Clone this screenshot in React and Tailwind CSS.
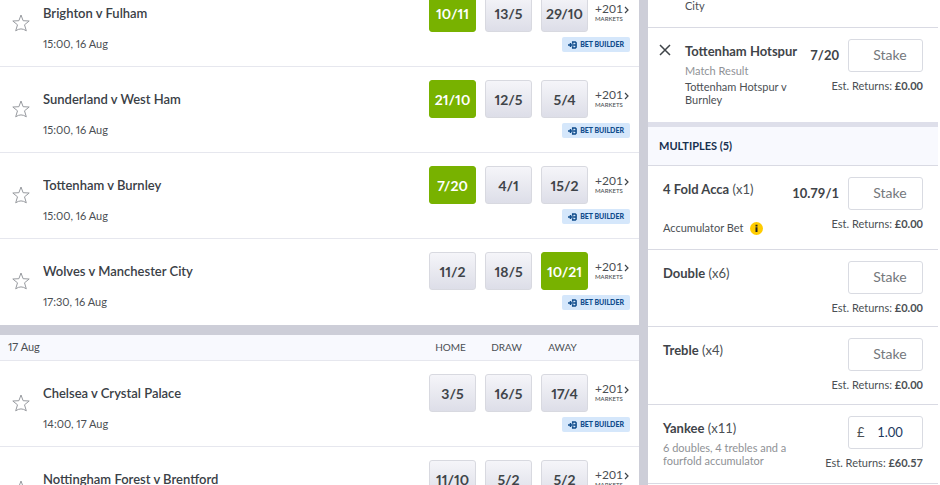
import { useState } from "react";

const saturday = [
    { name: "Brighton v Fulham", time: "15:00, 16 Aug", odds: ["10/11", "13/5", "29/10"], picked: 0 },
    { name: "Sunderland v West Ham", time: "15:00, 16 Aug", odds: ["21/10", "12/5", "5/4"], picked: 0 },
    { name: "Tottenham v Burnley", time: "15:00, 16 Aug", odds: ["7/20", "4/1", "15/2"], picked: 0 },
    { name: "Wolves v Manchester City", time: "17:30, 16 Aug", odds: ["11/2", "18/5", "10/21"], picked: 2 },
];

const sunday = [
    { name: "Chelsea v Crystal Palace", time: "14:00, 17 Aug", odds: ["3/5", "16/5", "17/4"] },
    { name: "Nottingham Forest v Brentford", odds: ["11/10", "5/2", "5/2"] },
];

const Star = () => (
    <svg viewBox="0 0 18 18" className="size-[18px]" fill="none" stroke="#979a9f" strokeWidth="1">
        <path d="M9 1 L11.1 6.7 L17.2 7 L12.5 10.8 L14.3 16.8 Q11.6 14.9 9 14.9 Q6.4 14.9 3.7 16.8 L5.5 10.8 L0.8 7 L6.9 6.7 Z" />
    </svg>
);

const BuilderIcon = () => (
    <svg viewBox="0 0 9 8" className="h-2 w-[9px]" fill="none" stroke="#0f4c8c" strokeWidth="1.5">
        <path d="M0 4 H8 M2.5 2 V6 M4.7 2.8 V1 H7.3 L8.1 1.8 V6.2 L7.3 7 H4.7 V5.2" />
    </svg>
);

const MatchRow = ({ match }) => {
    const [picked, setPicked] = useState(match.picked);
    return (
        <li className="flex h-[86px] border-b border-[#e6e7ee] pr-[9px] last:border-transparent">
            <button aria-label={"Favourite " + match.name} className="ml-3 mt-[33px] h-[18px]">
                <Star />
            </button>
            <div className="ml-[13px] min-w-0 flex-1 pt-[23px]">
                <a href="#" className="block truncate text-[13px] leading-[18px] font-semibold text-[#3a4046]">{match.name}</a>
                <div className="mt-[14px] text-[11px] leading-4 text-[#4b4f54] proportional-nums">{match.time}</div>
            </div>
            <div className="flex flex-col items-end pt-[13px]">
                <div className="flex items-center">
                    <div className="flex gap-[9px]">
                        {match.odds.map((price, index) => (
                            <button
                                key={index}
                                onClick={() => setPicked(index)}
                                className={
                                    "h-[38px] w-[47px] rounded-[3px] border text-[14px] font-bold proportional-nums " +
                                    (picked === index
                                        ? "border-[#78b200] bg-[#78b200] text-white"
                                        : "border-[#d8d9e0] bg-linear-to-b from-[#f5f5f9] to-[#dddee8] text-[#3f4449]")
                                }
                            >
                                {price}
                            </button>
                        ))}
                    </div>
                    <a href="#" className="ml-[7px] flex w-[34px] justify-between text-[#4b4f54]">
                        <span className="flex flex-col">
                            <span className="text-[12px] leading-3">+201</span>
                            <span className="text-[6px] leading-[8px] font-medium">MARKETS</span>
                        </span>
                        <svg viewBox="0 0 5 8" className="mt-[3px] h-2 w-[5px] shrink-0" fill="none" stroke="#3f4449" strokeWidth="1.2">
                            <path d="M1 1 L4 4 L1 7" />
                        </svg>
                    </a>
                    <span className="w-px" />
                </div>
                <span className="mt-[5px] flex h-[15px] items-center gap-[3px] rounded-[2px] bg-[#d5e7fb] px-[6px] text-[7px] font-black text-[#0f4c8c]">
                    <BuilderIcon />
                    BET BUILDER
                </span>
            </div>
        </li>
    );
};

const Stake = ({ id, label, value = "", returns = "0.00", odds }) => {
    const [stake, setStake] = useState(value);
    return (
        <div className="flex shrink-0 flex-col items-end">
            <div className="flex items-center gap-[9px]">
                {odds && <span className="text-[13px] font-bold text-[#3f4449]">{odds}</span>}
                <label htmlFor={id} className="flex h-[33px] w-[75px] items-center rounded-[3px] border border-[#d9dbe2] bg-white pr-[11px] pl-2">
                    <span className="w-3 text-[13px] text-[#4b4f54]">{stake && "£"}</span>
                    <input
                        id={id}
                        aria-label={label + " stake"}
                        value={stake}
                        onChange={(e) => setStake(e.target.value)}
                        placeholder="Stake"
                        className="min-w-0 flex-1 text-center text-[13px] text-[#1e3a5f] outline-none placeholder:text-[14px] placeholder:text-[#75787c]"
                    />
                </label>
            </div>
            <div className="mt-[6px] text-[11px] leading-4 text-[#4b4f54]">
                Est. Returns: <b>£{returns}</b>
            </div>
        </div>
    );
};

const Multiple = ({ name, count, height, children, ...stake }) => (
    <li className={"flex justify-between border-b border-[#d9dae3] pt-[11px] pr-[15px] pl-[15px] " + height}>
        <div className="pt-[2px]">
            <h3 className="text-[13px] leading-5 text-[#4b4f54]">
                <b className="text-[#3f4449]">{name}</b> ({count})
            </h3>
            {children}
        </div>
        <Stake id={name} label={name} {...stake} />
    </li>
);

export default function App() {
    return (
        <div className="flex h-screen overflow-hidden bg-white font-['Lato',sans-serif]">
            <main className="min-w-0 flex-1">
                <ul className="-mt-[19px]">
                    {saturday.map((match) => <MatchRow key={match.name} match={match} />)}
                </ul>
                <div className="h-[10px] bg-[#cdced8]" />
                <div className="flex h-[26px] items-center border-b border-[#e6e7ee] bg-[#f8f9fe] pr-[53px] pl-2 text-[#4b4f54]">
                    <h2 className="flex-1 text-[11px] proportional-nums">17 Aug</h2>
                    <div className="flex gap-[9px] text-center text-[10px]">
                        <span className="w-[47px]">HOME</span>
                        <span className="w-[47px]">DRAW</span>
                        <span className="w-[47px]">AWAY</span>
                    </div>
                </div>
                <ul>
                    {sunday.map((match) => <MatchRow key={match.name} match={match} />)}
                </ul>
            </main>
            <div className="w-[9px] bg-[#cdced8]" />
            <aside className="mr-[2px] w-[290px]">
                <div className="h-7 border-b border-[#d9dae3] pl-[37px] text-[11px] leading-[11px] text-[#4b4f54]">City</div>
                <section className="flex h-[94px] justify-between pt-[11px] pr-[15px] pl-[11px]">
                    <div className="flex gap-[14px]">
                        <button aria-label="Remove selection" className="mt-[5px] size-3">
                            <svg viewBox="0 0 12 12" className="size-3" stroke="#3f4449" strokeWidth="1.5">
                                <path d="M1 1 L11 11 M11 1 L1 11" />
                            </svg>
                        </button>
                        <div className="w-[116px] text-[11px] leading-[13px] text-[#4b4f54]">
                            <h3 className="text-[13px] leading-6 font-bold whitespace-nowrap text-[#3f4449]">Tottenham Hotspur</h3>
                            <p className="leading-4 text-[#8f9296]">Match Result</p>
                            <p className="mt-px">Tottenham Hotspur v Burnley</p>
                        </div>
                    </div>
                    <Stake id="spurs" label="Tottenham Hotspur" odds="7/20" />
                </section>
                <div className="h-[5px] bg-[#dedfea]" />
                <h2 className="flex h-[39px] items-center border-b border-[#d9dae3] bg-[#f8f9fe] pl-[11px] text-[11px] font-bold text-[#17304f]">
                    MULTIPLES (5)
                </h2>
                <ul>
                    <Multiple name="4 Fold Acca" count="x1" height="h-[84px]" odds="10.79/1">
                        <p className="mt-[21px] flex items-center gap-[6px] text-[11px] leading-4 text-[#4b4f54]">
                            Accumulator Bet
                            <svg viewBox="0 0 13 13" className="size-[13px]">
                                <circle cx="6.5" cy="6.5" r="6.5" fill="#fc0" />
                                <path d="M5.5 5.2 H7.5 V10 H5.5 Z M5.5 2.8 H7.5 V4.4 H5.5 Z" fill="#222" />
                            </svg>
                        </p>
                    </Multiple>
                    <Multiple name="Double" count="x6" height="h-[77px]" />
                    <Multiple name="Treble" count="x4" height="h-[78px]" />
                    <Multiple name="Yankee" count="x11" height="h-[79px]" value="1.00" returns="60.57">
                        <p className="mt-[3px] w-[130px] text-[11px] leading-[13px] text-[#8f9296]">
                            6 doubles, 4 trebles and a fourfold accumulator
                        </p>
                    </Multiple>
                </ul>
            </aside>
        </div>
    );
}
